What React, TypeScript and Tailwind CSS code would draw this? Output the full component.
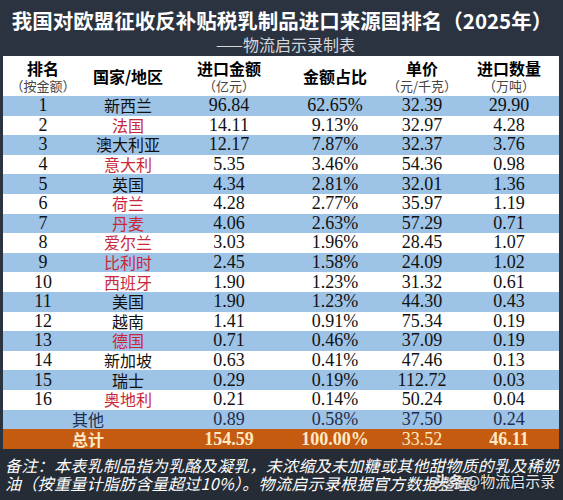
const rows = [
  { r: '1', c: '新西兰', red: false, amt: '96.84', pct: '62.65%', price: '32.39', qty: '29.90' },
  { r: '2', c: '法国', red: true, amt: '14.11', pct: '9.13%', price: '32.97', qty: '4.28' },
  { r: '3', c: '澳大利亚', red: false, amt: '12.17', pct: '7.87%', price: '32.37', qty: '3.76' },
  { r: '4', c: '意大利', red: true, amt: '5.35', pct: '3.46%', price: '54.36', qty: '0.98' },
  { r: '5', c: '英国', red: false, amt: '4.34', pct: '2.81%', price: '32.01', qty: '1.36' },
  { r: '6', c: '荷兰', red: true, amt: '4.28', pct: '2.77%', price: '35.97', qty: '1.19' },
  { r: '7', c: '丹麦', red: true, amt: '4.06', pct: '2.63%', price: '57.29', qty: '0.71' },
  { r: '8', c: '爱尔兰', red: true, amt: '3.03', pct: '1.96%', price: '28.45', qty: '1.07' },
  { r: '9', c: '比利时', red: true, amt: '2.45', pct: '1.58%', price: '24.09', qty: '1.02' },
  { r: '10', c: '西班牙', red: true, amt: '1.90', pct: '1.23%', price: '31.32', qty: '0.61' },
  { r: '11', c: '美国', red: false, amt: '1.90', pct: '1.23%', price: '44.30', qty: '0.43' },
  { r: '12', c: '越南', red: false, amt: '1.41', pct: '0.91%', price: '75.34', qty: '0.19' },
  { r: '13', c: '德国', red: true, amt: '0.71', pct: '0.46%', price: '37.09', qty: '0.19' },
  { r: '14', c: '新加坡', red: false, amt: '0.63', pct: '0.41%', price: '47.46', qty: '0.13' },
  { r: '15', c: '瑞士', red: false, amt: '0.29', pct: '0.19%', price: '112.72', qty: '0.03' },
  { r: '16', c: '奥地利', red: true, amt: '0.21', pct: '0.14%', price: '50.24', qty: '0.04' },
]

const grid = 'grid grid-cols-[80px_90px_112px_100px_74px_1fr] items-center'
const num = "font-['Liberation_Serif','Noto_Sans_CJK_SC',serif] text-[18px] text-center"
const cjk = "font-['Noto_Sans_CJK_SC',sans-serif]"

function Head({ top, sub }: { top: string; sub?: string }) {
  return (
    <div className="flex flex-col items-center">
      <div className={`${cjk} text-[16px] font-bold leading-[20px] text-black`}>{top}</div>
      {sub && <div className={`${cjk} text-[13px] leading-[16px] text-[#444]`}>{sub}</div>}
    </div>
  )
}

export default function App() {
  return (
    <div className="relative flex h-[500px] w-[563px] flex-col overflow-hidden bg-[#2b3340]">
      {/* title */}
      <div className="flex h-[56px] flex-col items-center pt-[6px]">
        <h1 className={`${cjk} pl-[1px] text-[20.5px] font-bold leading-[28px] text-white`}>
          我国对欧盟征收反补贴税乳制品进口来源国排名（2025年）
        </h1>
        <p className={`${cjk} pl-[8px] text-[16px] leading-[20px] text-[#d6d8dc]`}>——物流启示录制表</p>
      </div>

      <div className="ml-[3px] mr-[4px]">
        <div className={`${grid} h-[40px] bg-white`}>
          <Head top="排名" sub="（按金额）" />
          <Head top="国家/地区" />
          <Head top="进口金额" sub="（亿元）" />
          <Head top="金额占比" />
          <Head top="单价" sub="（元/千克）" />
          <Head top="进口数量" sub="（万吨）" />
        </div>

        {rows.map((d, i) => (
          <div key={d.r} className={`${grid} h-[19.6px] ${i % 2 === 0 ? 'bg-[#9dc3e6]' : 'bg-white'} text-[#111]`}>
            <div className={`${num} leading-[19px]`}>{d.r}</div>
            <div className={`${cjk} text-center text-[16px] leading-[19px] ${d.red ? 'text-[#c8283c]' : 'text-[#111]'}`}>
              {d.c}
            </div>
            <div className={`${num} leading-[19px]`}>{d.amt}</div>
            <div className={`${num} leading-[19px]`}>{d.pct}</div>
            <div className={`${num} leading-[19px]`}>{d.price}</div>
            <div className={`${num} leading-[19px]`}>{d.qty}</div>
          </div>
        ))}

        <div className={`${grid} h-[19.6px] bg-[#9dc3e6] text-[#1f2d4d]`}>
          <div className={`${cjk} col-span-2 text-center text-[16px] leading-[19px]`}>其他</div>
          <div className={`${num} leading-[19px]`}>0.89</div>
          <div className={`${num} leading-[19px]`}>0.58%</div>
          <div className={`${num} leading-[19px]`}>37.50</div>
          <div className={`${num} leading-[19px]`}>0.24</div>
        </div>

        <div className={`${grid} h-[20px] bg-[#c55a11] text-[#ffe9c4]`}>
          <div className={`${cjk} col-span-2 text-center text-[16px] font-bold leading-[19px]`}>总计</div>
          <div className={`${num} font-bold leading-[19px]`}>154.59</div>
          <div className={`${num} font-bold leading-[19px]`}>100.00%</div>
          <div className={`${num} leading-[19px]`}>33.52</div>
          <div className={`${num} font-bold leading-[19px]`}>46.11</div>
        </div>
      </div>

      {/* note */}
      <div className="flex-1 bg-[#252c36] px-[5px] pt-[7px]">
        <p className={`${cjk} text-[16px] italic leading-[18px] tracking-[0.3px] whitespace-nowrap text-white`}>
          备注：本表乳制品指为乳酪及凝乳，未浓缩及未加糖或其他甜物质的乳及稀奶
        </p>
        <p className={`${cjk} text-[16px] italic leading-[18px] tracking-[0.3px] whitespace-nowrap text-white`}>
          油（按重量计脂肪含量超过10%）。物流启示录根据官方数据整理。
        </p>
      </div>

      {/* watermark */}
      <div
        className={`${cjk} absolute left-[434px] top-[471px] flex items-center gap-[2px] whitespace-nowrap text-[15px] leading-[20px] text-white/90 [text-shadow:0_0_2px_rgba(0,0,0,0.8)]`}
      >
        <span className="font-bold">头条</span>
        <span>@物流启示录</span>
      </div>
    </div>
  )
}
